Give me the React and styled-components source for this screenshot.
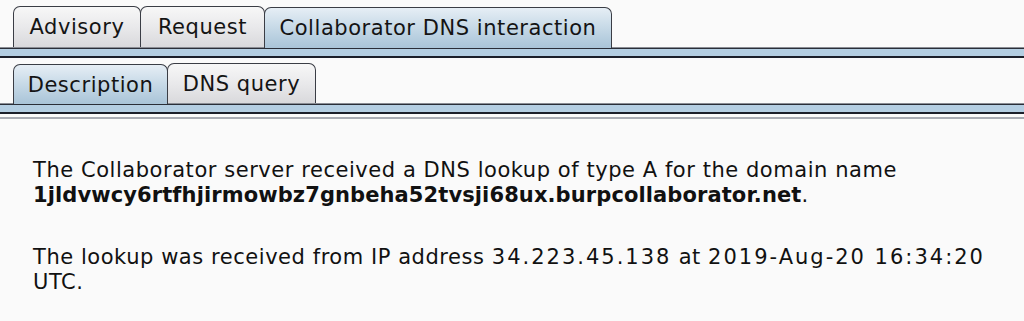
import React from "react";
import styled, { createGlobalStyle } from "styled-components";

const GlobalStyle = createGlobalStyle`
  html, body {
    margin: 0;
    padding: 0;
    background: #fafafa;
  }
  body {
    font-family: "DejaVu Sans", "Liberation Sans", sans-serif;
    color: #111;
  }
`;

const Page = styled.div`
  width: 1024px;
  height: 321px;
  overflow: hidden;
  background: #fafafa;
`;

const TabStrip = styled.div`
  display: flex;
  align-items: flex-end;
  padding: ${({ $top }) => $top}px 0 0 13px;
  border-bottom: 1px solid #8a8d94;
`;

const Tab = styled.div`
  width: ${({ $width }) => $width}px;
  height: ${({ $height }) => $height}px;
  box-sizing: border-box;
  margin-left: -1px;
  margin-bottom: ${({ $active }) => ($active ? "-1px" : "0")};
  display: flex;
  align-items: center;
  justify-content: center;
  font-size: 21px;
  letter-spacing: 0.55px;
  color: #141414;
  border: 1px solid #3a3d45;
  border-bottom: none;
  border-radius: 7px 7px 0 0;
  white-space: nowrap;
  background: ${({ $active }) =>
    $active
      ? "linear-gradient(to bottom, #e6eef5 0%, #c9dbe8 45%, #a9c4d8 100%)"
      : "linear-gradient(to bottom, #f7f7f7 0%, #e9e9eb 50%, #d9d9dc 100%)"};
  &:first-child {
    margin-left: 0;
  }
`;

const Band = styled.div`
  height: 7px;
  background: #b4cee2;
  border-top: 1px solid #2a2e38;
  border-bottom: 2px solid #1c1f2a;
`;

const SubArea = styled.div`
  padding-top: 5px;
`;

const PanelEdge = styled.div`
  margin-top: 3px;
  height: 2px;
  background: #a9acb4;
`;

const Content = styled.div`
  padding: 39px 30px 0 33px;
  font-size: 21px;
  line-height: 25px;
  letter-spacing: 0.55px;
  b {
    letter-spacing: 0.1px;
  }
`;

const Para = styled.p`
  margin: 0 0 ${({ $gap }) => $gap}px 0;
`;

const Num = styled.span`
  letter-spacing: 2px;
`;

export default function App() {
  return (
    <Page>
      <GlobalStyle />
      <TabStrip $top={6}>
        <Tab $width={128} $height={41}>Advisory</Tab>
        <Tab $width={125} $height={41}>Request</Tab>
        <Tab $width={348} $height={41} $active>
          Collaborator DNS interaction
        </Tab>
      </TabStrip>
      <Band />
      <SubArea>
        <TabStrip $top={0}>
          <Tab $width={155} $height={40} $active>
            Description
          </Tab>
          <Tab $width={149} $height={40}>DNS query</Tab>
        </TabStrip>
        <Band />
      </SubArea>
      <PanelEdge />
      <Content>
        <Para $gap={37}>
          The Collaborator server received a DNS lookup of type A for the domain name{" "}
          <b>1jldvwcy6rtfhjirmowbz7gnbeha52tvsji68ux.burpcollaborator.net</b>.
        </Para>
        <Para $gap={0}>
          The lookup was received from IP address <Num>34.223.45.138</Num> at{" "}
          <Num>2019-Aug-20 16:34:20</Num> UTC.
        </Para>
      </Content>
    </Page>
  );
}
